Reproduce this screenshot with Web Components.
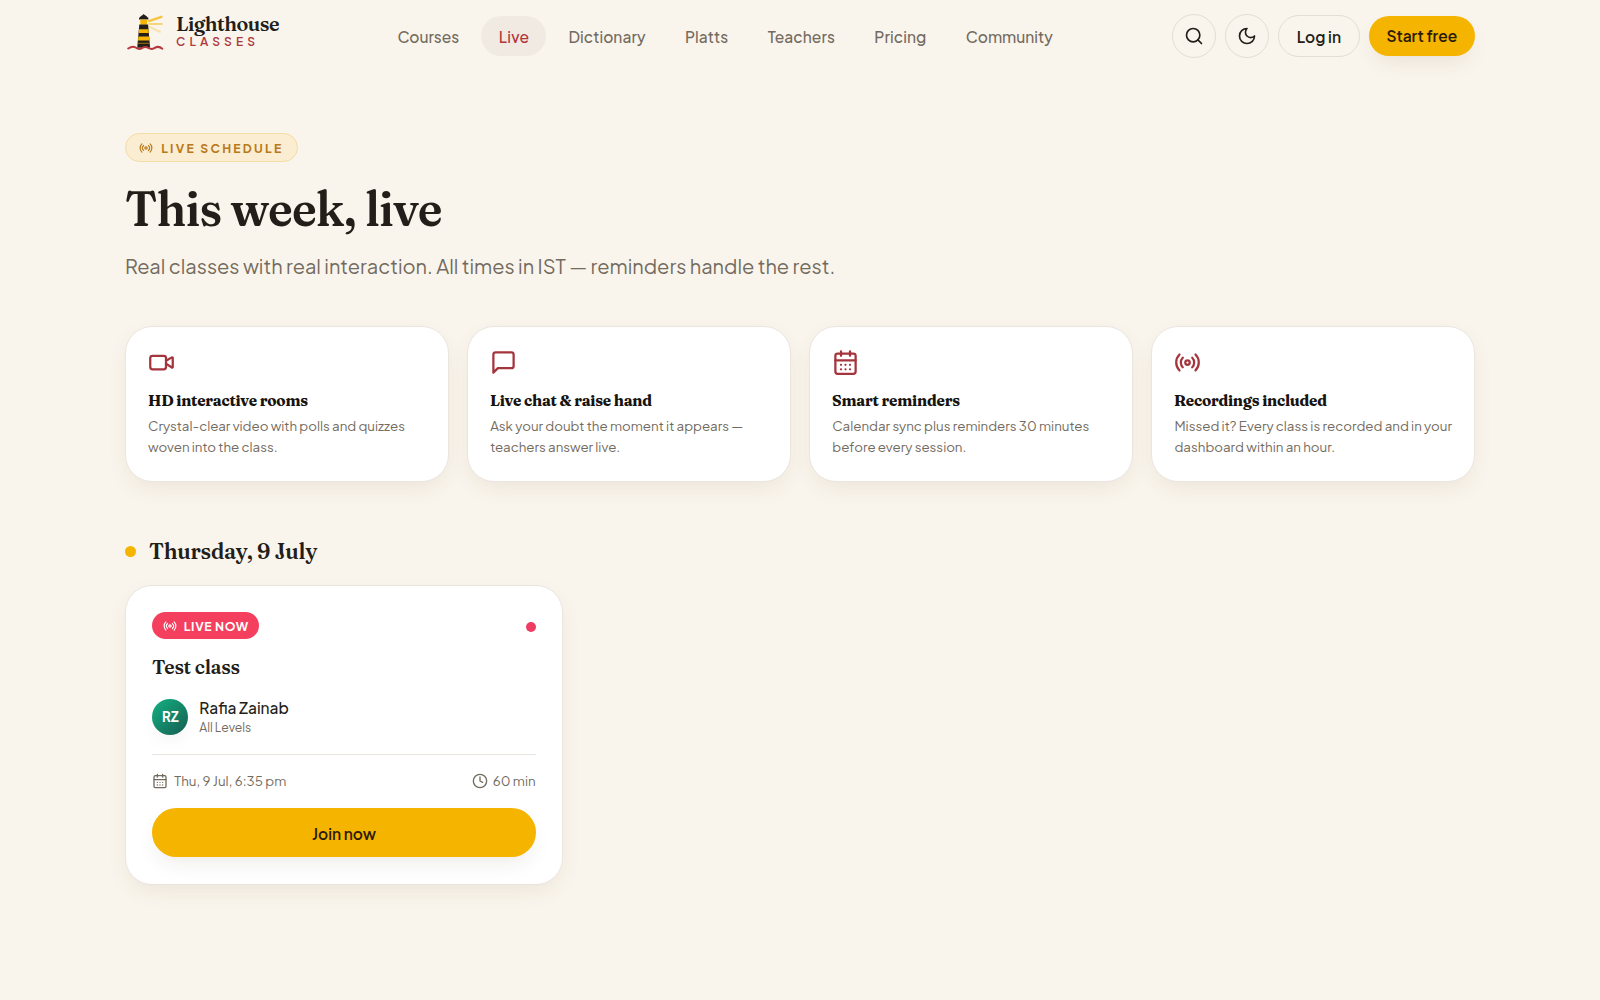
<!DOCTYPE html>
<html lang="en">
<head>
<meta charset="utf-8">
<title>Live schedule – Lighthouse Classes</title>
<style>
:root{--bg:#faf5ec;--ink:#231e19;--muted:#736b60;--line:#ebe5e0;--gold:#f4b400;--red:#a5353c;--rose:#f43f5e;
--serif:"Fraunces","Liberation Serif",serif;--sans:"Plus Jakarta Sans","Inter",sans-serif}
html,body{margin:0;background:var(--bg);color:var(--ink);font-family:var(--sans)}
body{height:1000px;overflow:hidden}
</style>
</head>
<body>
<live-page></live-page>
<script>
const define=(name,html,setup)=>{
  const t=document.createElement('template');t.innerHTML=html;
  customElements.define(name,class extends HTMLElement{
    connectedCallback(){
      if(this.shadowRoot)return;
      this.attachShadow({mode:'open'}).append(t.content.cloneNode(true));
      if(setup)setup(this,this.shadowRoot);
    }
  });
};

/* A single line that fills the width in "w": condensed by "s" first, then tracked. */
define('fit-text',`<style>:host{display:block;white-space:nowrap;flex:none}span{display:inline-block;vertical-align:top;transform-origin:0 50%}</style><span><slot></slot></span>`,(el,root)=>{
  const w=+el.getAttribute('w'),s=+(el.getAttribute('s')||1),span=root.querySelector('span');
  const n=el.textContent.length,natural=span.getBoundingClientRect().width;
  el.style.width=w+'px';
  if(el.hasAttribute('plain'))return;
  span.style.letterSpacing=((w/s-natural)/(n-1)).toFixed(3)+'px';
  if(s!==1)span.style.transform='scaleX('+s+')';
});

const ICONS={
  video:'<path d="m16 13 5.223 3.482a.5.5 0 0 0 .777-.416V7.87a.5.5 0 0 0-.752-.432L16 10.5"/><rect x="2" y="6" width="14" height="12" rx="2"/>',
  chat:'<path d="M21 15a2 2 0 0 1-2 2H7l-4 4V5a2 2 0 0 1 2-2h14a2 2 0 0 1 2 2z"/>',
  calendar:'<path d="M8 2v4M16 2v4M3 10h18"/><rect width="18" height="18" x="3" y="4" rx="2"/><path d="M8 14h.01M12 14h.01M16 14h.01M8 18h.01M12 18h.01M16 18h.01"/>',
  radio:'<path d="M4.9 19.1C1 15.2 1 8.8 4.9 4.9M7.8 16.2c-2.3-2.3-2.3-6.1 0-8.5M16.2 7.8c2.3 2.3 2.3 6.1 0 8.5M19.1 4.9C23 8.8 23 15.1 19.1 19"/><circle cx="12" cy="12" r="2"/>',
  search:'<circle cx="11" cy="11" r="8"/><path d="m21 21-4.3-4.3"/>',
  moon:'<path d="M12 3a6 6 0 0 0 9 9 9 9 0 1 1-9-9Z"/>',
  clock:'<circle cx="12" cy="12" r="10"/><path d="M12 6v6l4 2"/>'
};
define('ui-icon',`<style>:host{display:block;flex:none;line-height:0}svg{display:block;fill:none;stroke:currentColor;stroke-width:2;stroke-linecap:round;stroke-linejoin:round}</style><svg viewBox="0 0 24 24"></svg>`,(el,root)=>{
  const s=root.querySelector('svg'),z=el.getAttribute('size');
  s.setAttribute('width',z);s.setAttribute('height',z);s.innerHTML=ICONS[el.getAttribute('name')];
});

define('brand-logo',`<style>
:host{display:flex;width:255px;align-items:flex-start;height:72px;flex:none}
svg{display:block;margin:13px 12px 0 2px;flex:none}
.words{padding-top:10.6px}
.n{font:600 21px/24px var(--serif)}
.c{font:600 12px/12px var(--sans);color:#ae3a41;margin-top:1.6px}
</style>
<svg width="37" height="38" viewBox="0 0 37 38">
<path d="M16.7 1c1 1.2 3.6 2.2 4.2 4.2h-8.4c.6-2 3.2-3 4.2-4.2Z" fill="#231e19"/>
<rect x="12" y="4.6" width="9.4" height="2" rx=".6" fill="#231e19"/>
<rect x="13.3" y="6.6" width="6.8" height="5" fill="#f4b400"/>
<path d="M12.3 11.4h8.8l2 23.3H10.2Z" fill="#231e19"/>
<path d="M12 16.2h9.5l.3 3.8H11.7ZM11.4 23.6h10.8l.3 4H11Z" fill="#f4b400"/>
<path d="M10.6 29.8h11.8v1.2H10.5Z" fill="#f4b400" opacity=".45"/>
<g stroke="#f4b400" stroke-linecap="round" fill="none"><path d="M22 8.2 34.4 3.8" stroke-width="2.3" opacity=".75"/><path d="M22.4 11h12.4" stroke-width="2.1" opacity=".5"/><path d="m22 13.7 11 5.1" stroke-width="1.9" opacity=".3"/></g>
<path d="M1.2 35.5c2.6-1.8 5-2.6 7.4-1 2.2 1.5 3.8 2.2 6.3.6 2.4-1.6 4.2-1.6 6.6-.1 2.4 1.6 4 1.3 6.2-.1 2.6-1.6 5-1.5 7.6.8" fill="none" stroke="#b5393f" stroke-width="2" stroke-linecap="round"/>
</svg>
<div class="words"><fit-text class="n" w="103.5" s=".94">Lighthouse</fit-text><fit-text class="c" w="79">CLASSES</fit-text></div>`);

define('nav-link',`<style>
:host{display:flex;align-items:center;height:40px;padding:1.4px 17.4px 0;border-radius:20px;font:500 15.55px/24px var(--sans);color:var(--muted);box-sizing:border-box}
:host([active]){background:#f0eae3;color:#b2333a}
</style><slot></slot>`);

define('round-button',`<style>
:host{box-sizing:border-box;width:44.4px;height:44.4px;border:1px solid #e3ddd5;border-radius:50%;display:flex;align-items:center;justify-content:center}
</style><slot></slot>`);

define('pill-button',`<style>
:host{box-sizing:border-box;height:42.5px;border:1px solid #e3ddd5;border-radius:30px;display:flex;align-items:center;justify-content:center;padding:1.2px 17.8px 0;font:600 15.5px/24px var(--sans);color:var(--ink)}
:host([primary]){height:40.5px;border:0;background:var(--gold);color:#2c1a08;padding:1px 17.8px 0;box-shadow:0 10px 22px -6px rgba(60,40,20,.1)}
:host([wide]){height:48.8px;padding-top:1.4px}
</style><slot></slot>`);

define('site-header',`<style>
:host{display:flex;align-items:center;height:72px;padding:0 125px}
nav{display:flex;gap:4.7px;flex:none}
.actions{display:flex;align-items:center;gap:8.8px;margin-left:auto}
</style>
<brand-logo></brand-logo>
<nav>
<nav-link><fit-text w="61.8">Courses</fit-text></nav-link>
<nav-link active><fit-text w="30.4">Live</fit-text></nav-link>
<nav-link><fit-text w="77">Dictionary</fit-text></nav-link>
<nav-link><fit-text w="43.2">Platts</fit-text></nav-link>
<nav-link><fit-text w="67.2">Teachers</fit-text></nav-link>
<nav-link><fit-text w="52">Pricing</fit-text></nav-link>
<nav-link><fit-text w="87">Community</fit-text></nav-link>
</nav>
<div class="actions">
<round-button><ui-icon name="search" size="20"></ui-icon></round-button>
<round-button><ui-icon name="moon" size="20"></ui-icon></round-button>
<pill-button><fit-text w="44.3">Log in</fit-text></pill-button>
<pill-button primary><fit-text w="70.8">Start free</fit-text></pill-button>
</div>`);

define('feature-card',`<style>
:host{box-sizing:border-box;display:block;flex:1;min-width:0;height:156px;background:#fff;border:1px solid var(--line);border-radius:27px;padding:22px 0 0 22px;box-shadow:0 8px 24px -6px rgba(70,55,40,.11)}
.i{color:var(--red);margin-left:-.4px}
.t{font:700 15.55px/22px var(--serif);color:#17130f;margin-top:13.5px}
.d{font:400 13.33px/21px var(--sans);color:var(--muted);margin-top:3.5px}
</style><div class="i"></div><div class="t"><slot name="title"></slot></div><div class="d"><slot></slot></div>`,(el,root)=>{
  root.querySelector('.i').innerHTML='<ui-icon size="27" name="'+el.getAttribute('icon')+'"></ui-icon>';
});

define('class-card',`<style>
:host{box-sizing:border-box;display:block;width:438px;height:300px;background:#fff;border:1px solid var(--line);border-radius:27px;padding:26px 26.3px;box-shadow:0 8px 24px -6px rgba(70,55,40,.11)}
.top{display:flex;justify-content:space-between;align-items:center;height:27.5px}
.badge{display:flex;align-items:center;gap:6.5px;background:var(--rose);color:#fff;height:27px;border-radius:14px;padding:0 11px;font:700 12.2px/20px var(--sans)}
.dot{width:10px;height:10px;border-radius:50%;background:#ed3d62;margin-top:3px}
.t{font:600 20px/28px var(--serif);margin-top:14.2px}
.person{display:flex;gap:11px;margin-top:17.2px;height:36px}
.av{width:36px;height:36px;border-radius:50%;background:linear-gradient(135deg,#12b282,#175c51);color:#fff;display:flex;align-items:center;justify-content:center;font:700 13.3px/20px var(--sans);box-shadow:0 8px 18px -4px rgba(60,40,20,.06)}
.name{font:500 15.5px/20px var(--sans);margin-top:-.4px}
.lvl{font:400 12.2px/16px var(--sans);color:var(--muted);margin-top:.8px}
.meta{display:flex;justify-content:space-between;margin-top:19.2px;border-top:1px solid var(--line);padding-top:16.6px;font:400 13.33px/20px var(--sans);color:var(--muted)}
.meta div{display:flex;align-items:center;gap:6px}
.meta .time{gap:4.5px}
pill-button{margin-top:17px}
</style>
<div class="top"><div class="badge"><ui-icon name="radio" size="14"></ui-icon><fit-text w="64.5">LIVE NOW</fit-text></div><span class="dot"></span></div>
<fit-text class="t" w="88" s=".97">Test class</fit-text>
<div class="person"><div class="av"><fit-text w="16.5">RZ</fit-text></div><div><fit-text class="name" plain w="89.5">Rafia Zainab</fit-text><fit-text class="lvl" w="52">All Levels</fit-text></div></div>
<div class="meta"><div><ui-icon name="calendar" size="16"></ui-icon><fit-text w="112">Thu, 9 Jul, 6:35 pm</fit-text></div><div class="time"><ui-icon name="clock" size="16"></ui-icon><fit-text w="43">60 min</fit-text></div></div>
<pill-button primary wide><fit-text w="64">Join now</fit-text></pill-button>`);

define('live-page',`<style>
:host{display:block}
main{padding:61px 125px 0}
.tag{box-sizing:border-box;display:flex;align-items:center;gap:8.2px;width:173px;height:29px;border:1px solid #f3dca5;border-radius:15px;background:#faedd2;color:#b9791a;padding:.6px 0 0 13px;font:700 12.2px/20px var(--sans)}
h1{font:600 50px/56px var(--serif);margin:18px 0 0}
.sub{font:400 20px/32px var(--sans);color:var(--muted);margin-top:14.2px}
.features{display:flex;gap:18.6px;margin-top:44px}
.day{display:flex;align-items:center;gap:13.3px;margin-top:54px;font:600 22.3px/30px var(--serif)}
.day i{width:11px;height:11px;border-radius:50%;background:var(--gold)}
class-card{margin-top:18.6px}
</style>
<site-header></site-header>
<main>
<div class="tag"><ui-icon name="radio" size="14"></ui-icon><fit-text w="120">LIVE SCHEDULE</fit-text></div>
<h1><fit-text w="317.5" s=".925">This week, live</fit-text></h1>
<fit-text class="sub" w="710.3">Real classes with real interaction. All times in IST — reminders handle the rest.</fit-text>
<div class="features">
<feature-card icon="video"><fit-text slot="title" w="160" s=".98">HD interactive rooms</fit-text><fit-text w="257">Crystal-clear video with polls and quizzes</fit-text><fit-text w="129.5">woven into the class.</fit-text></feature-card>
<feature-card icon="chat"><fit-text slot="title" w="162" s=".98">Live chat &amp; raise hand</fit-text><fit-text w="253">Ask your doubt the moment it appears —</fit-text><fit-text w="130">teachers answer live.</fit-text></feature-card>
<feature-card icon="calendar"><fit-text slot="title" w="128" s=".98">Smart reminders</fit-text><fit-text w="257">Calendar sync plus reminders 30 minutes</fit-text><fit-text w="134">before every session.</fit-text></feature-card>
<feature-card icon="radio"><fit-text slot="title" w="153" s=".98">Recordings included</fit-text><fit-text w="277.5">Missed it? Every class is recorded and in your</fit-text><fit-text w="160.5">dashboard within an hour.</fit-text></feature-card>
</div>
<div class="day"><i></i><fit-text w="168.5" s=".96">Thursday, 9 July</fit-text></div>
<class-card></class-card>
</main>`);
</script>
</body>
</html>
